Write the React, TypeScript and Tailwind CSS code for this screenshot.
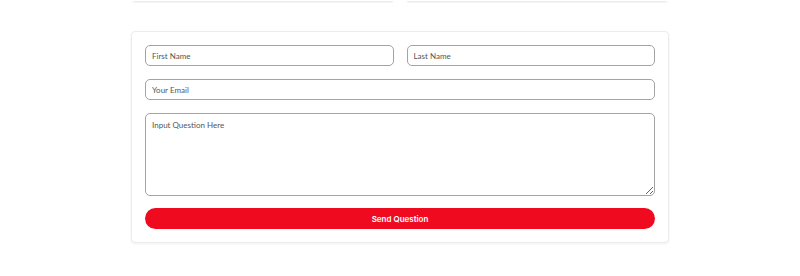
export default function App() {
  return (
    <div className="min-h-[276px] bg-white font-['Lato',sans-serif]">
      {/* Bottom edges of the cards above */}
      <div className="mx-auto flex w-[534px] gap-[14px]">
        <div className="h-px flex-1 rounded-b bg-white shadow-[0_1px_2px_rgba(0,0,0,0.18)]" />
        <div className="h-px flex-1 rounded-b bg-white shadow-[0_1px_2px_rgba(0,0,0,0.18)]" />
      </div>

      {/* Question form */}
      <form
        className="mx-auto mt-[30px] flex w-[538px] flex-col gap-[13px] rounded border border-[#ececec] bg-white p-[13px] shadow-[0_1px_3px_rgba(0,0,0,0.06)]"
        onSubmit={(e) => e.preventDefault()}
      >
        <div className="flex gap-[13px]">
          <input
            type="text"
            placeholder="First Name"
            className="h-[21px] flex-1 rounded-[5px] border border-[#a3a3a3] px-[6px] text-[8px] text-[#333] placeholder:text-[#555] outline-none"
          />
          <input
            type="text"
            placeholder="Last Name"
            className="h-[21px] flex-1 rounded-[5px] border border-[#a3a3a3] px-[6px] text-[8px] text-[#333] placeholder:text-[#555] outline-none"
          />
        </div>
        <input
          type="email"
          placeholder="Your Email"
          className="h-[21px] w-full rounded-[5px] border border-[#a3a3a3] px-[6px] text-[8px] text-[#333] placeholder:text-[#555] outline-none"
        />
        <textarea
          placeholder="Input Question Here"
          className="block h-[83px] w-full rounded-[5px] border border-[#a3a3a3] px-[6px] py-[5px] text-[8px] text-[#333] placeholder:text-[#555] outline-none"
        />
        <button
          type="submit"
          className="-mt-px h-[21px] w-full rounded-full bg-[#f00a1f] text-[8px] font-semibold text-white font-['Inter',sans-serif]"
        >
          Send Question
        </button>
      </form>
    </div>
  );
}
